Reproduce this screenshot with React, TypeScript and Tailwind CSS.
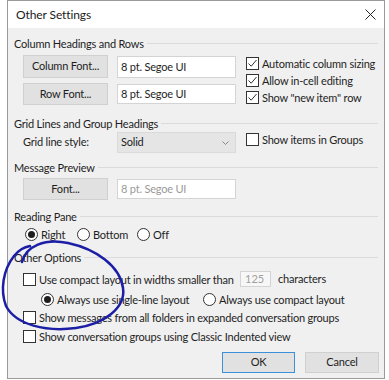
import React from "react"

const font = { fontFamily: 'Lato, "Noto Sans", sans-serif' }

const txt = "text-[11px] tracking-[-0.2px] text-[#1e1e1e]"

function Header({ title, className = "" }: { title: string; className?: string }) {
  return (
    <div className={`flex items-center h-[16px] pl-[6px] pr-[6px] ${className}`}>
      <span className={`${txt} leading-none pr-[3px]`}>{title}</span>
      <div className="flex-1 h-px bg-[#dadada]" />
    </div>
  )
}

function Check({ checked = false, label }: { checked?: boolean; label: string }) {
  return (
    <div className="flex items-center h-[17px] gap-[3px]">
      <div className="w-[13px] h-[13px] border border-[#333] bg-white flex items-center justify-center shrink-0">
        {checked && (
          <svg width="11" height="11" viewBox="0 0 11 11">
            <path d="M1.5 5.5 L4.2 8.2 L9.5 2" fill="none" stroke="#333" strokeWidth="1" />
          </svg>
        )}
      </div>
      <span className={`${txt} leading-none whitespace-nowrap`}>{label}</span>
    </div>
  )
}

function Radio({ checked = false, label }: { checked?: boolean; label: string }) {
  return (
    <div className="flex items-center h-[16px] gap-[3px]">
      <div className="w-[13px] h-[13px] rounded-full border border-[#333] bg-white flex items-center justify-center shrink-0">
        {checked && <div className="w-[7px] h-[7px] rounded-full bg-[#1e1e1e]" />}
      </div>
      <span className={`${txt} leading-none whitespace-nowrap`}>{label}</span>
    </div>
  )
}

function Btn({ label, className = "" }: { label: string; className?: string }) {
  return (
    <div
      className={`w-[85px] bg-[#e1e1e1] border border-[#d0d0d0] flex items-center justify-center ${txt} ${className}`}
    >
      {label}
    </div>
  )
}

function Field({ value, disabled = false, className = "" }: { value: string; disabled?: boolean; className?: string }) {
  return (
    <div
      className={`w-[119px] bg-white border border-[#d4d4d4] flex items-center pl-[3px] text-[11px] tracking-[-0.2px] ${
        disabled ? "text-[#9a9a9a]" : "text-[#1e1e1e]"
      } ${className}`}
    >
      {value}
    </div>
  )
}

export default function App() {
  return (
    <div className="w-[389px] h-[380px] bg-white relative overflow-hidden" style={font}>
      <div className="ml-[7px] w-[378px] h-[379px] border border-[#9a9a9a] flex flex-col bg-[#f0f0f0]">
        {/* title bar */}
        <div className="h-[27px] bg-white flex items-center justify-between pl-[8px] pr-[8px] shrink-0">
          <span className="text-[12px] tracking-[-0.1px] text-[#1a1a1a]">Other Settings</span>
          <svg width="11" height="11" viewBox="0 0 11 11">
            <path d="M0.5 0.5 L10.5 10.5 M10.5 0.5 L0.5 10.5" stroke="#222" strokeWidth="1" />
          </svg>
        </div>

        <Header title="Column Headings and Rows" className="mt-[7px]" />
        <div className="flex pl-[15px] mt-[4px]">
          <div className="flex flex-col gap-[5px]">
            <div className="flex gap-[9px]">
              <Btn label="Column Font..." className="h-[23px]" />
              <Field value="8 pt. Segoe UI" className="h-[22px] mt-[1px]" />
            </div>
            <div className="flex gap-[9px]">
              <Btn label="Row Font..." className="h-[22px]" />
              <Field value="8 pt. Segoe UI" className="h-[20px] mt-[1px]" />
            </div>
          </div>
          <div className="flex flex-col ml-[10px]">
            <Check checked label="Automatic column sizing" />
            <Check checked label="Allow in-cell editing" />
            <Check checked label={'Show "new item" row'} />
          </div>
        </div>

        <Header title="Grid Lines and Group Headings" className="mt-[9px]" />
        <div className="flex pl-[15px] mt-[1px] items-start">
          <div className={`w-[94px] h-[21px] flex items-center ${txt}`}>Grid line style:</div>
          <div className={`w-[119px] h-[21px] bg-[#e5e5e5] border border-[#dadada] flex items-center justify-between pl-[3px] pr-[6px] ${txt}`}>
            <span>Solid</span>
            <svg width="7" height="4" viewBox="0 0 7 4">
              <path d="M0.5 0.5 L3.5 3.5 L6.5 0.5" fill="none" stroke="#888" strokeWidth="1" />
            </svg>
          </div>
          <div className="ml-[10px] -mt-[1px]">
            <Check label="Show items in Groups" />
          </div>
        </div>

        <Header title="Message Preview" className="mt-[6px]" />
        <div className="flex pl-[15px] mt-[3px] gap-[9px] items-start">
          <Btn label="Font..." className="h-[22px]" />
          <Field value="8 pt. Segoe UI" disabled className="h-[20px] mt-[1px]" />
        </div>

        <Header title="Reading Pane" className="mt-[8px]" />
        <div className="flex pl-[17px] mt-[2px]">
          <div className="w-[52px]">
            <Radio checked label="Right" />
          </div>
          <div className="w-[60px]">
            <Radio label="Bottom" />
          </div>
          <Radio label="Off" />
        </div>

        <Header title="Other Options" className="mt-[7px]" />
        <div className="flex items-center pl-[15px] mt-[6px] h-[16px]">
          <div className="w-[217px]">
            <Check label="Use compact layout in widths smaller than" />
          </div>
          <div className="w-[31px] h-[16px] border border-[#d4d4d4] bg-[#f7f7f7] text-[11px] text-[#a0a0a0] flex items-center pl-[4px]">
            125
          </div>
          <span className={`ml-[7px] ${txt}`}>characters</span>
        </div>
        <div className="flex pl-[33px] mt-[4px]">
          <div className="w-[162px]">
            <Radio checked label="Always use single-line layout" />
          </div>
          <Radio label="Always use compact layout" />
        </div>
        <div className="pl-[15px] mt-[2px]">
          <Check label="Show messages from all folders in expanded conversation groups" />
        </div>
        <div className="pl-[15px] mt-[2px]">
          <Check label="Show conversation groups using Classic Indented view" />
        </div>

        <div className="flex justify-end gap-[10px] pr-[5px] mt-[7px]">
          <div className={`w-[73px] h-[21px] bg-[#e1e1e1] border border-[#3c8fd9] flex items-center justify-center ${txt}`}>
            OK
          </div>
          <div className={`w-[74px] h-[21px] bg-[#e1e1e1] border border-[#d0d0d0] flex items-center justify-center ${txt}`}>
            Cancel
          </div>
        </div>
      </div>

      {/* hand-drawn ink circle */}
      <svg className="absolute left-0 top-0 pointer-events-none" width="389" height="380" viewBox="0 0 389 380">
        <path
          d="M22 262 C 26 246, 45 238, 68 243 C 96 249, 120 266, 123 288 C 126 308, 104 324, 76 328 C 46 332, 16 325, 6 306 C 0 290, 3 270, 14 256 C 18 251, 24 247, 30 246"
          fill="none"
          stroke="#1c1fa6"
          strokeWidth="2.5"
          strokeLinecap="round"
        />
      </svg>
    </div>
  )
}
